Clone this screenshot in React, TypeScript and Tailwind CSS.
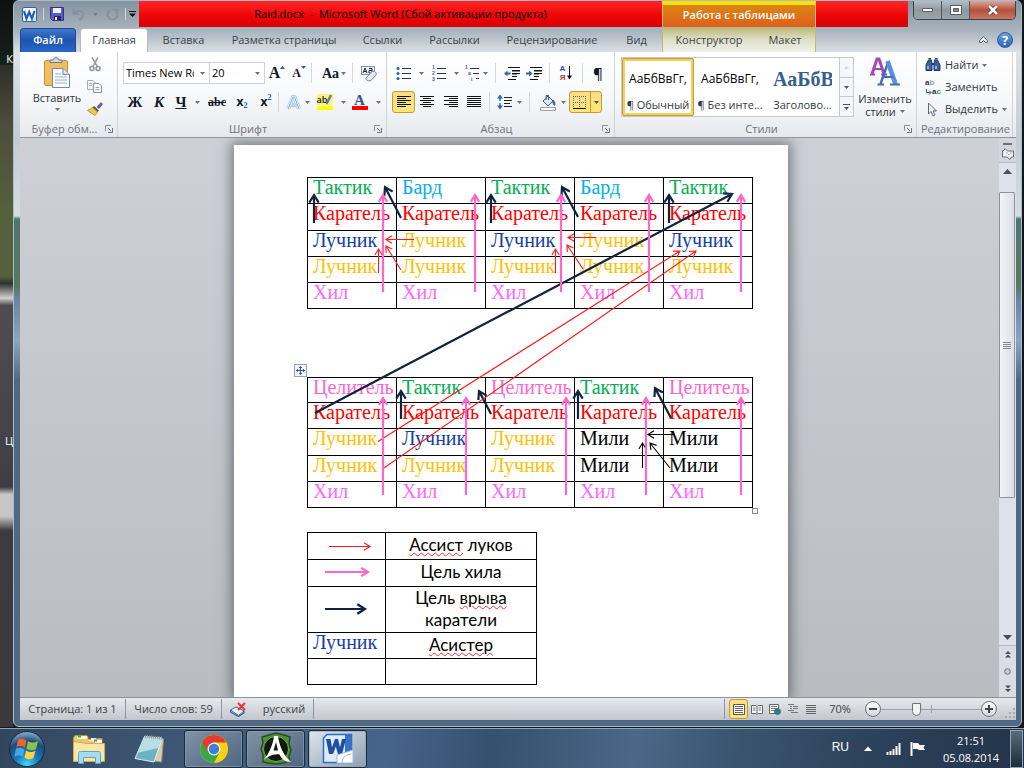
import type { ReactNode } from 'react';
import { clsx } from 'clsx';

const GREEN = 'text-[#00b050]';
const SKY = 'text-[#00b0f0]';
const RED = 'text-[#ff0000]';
const BLUE = 'text-[#1240ab]';
const GOLD = 'text-[#ffc000]';
const VIOLET = 'text-[#ff66ff]';
const PINK = 'text-[#ff66cc]';
const BLACK = 'text-black';

type Cell = [string, string];

const CUSTODIAN: Cell = ['Каратель', RED];
const HEAL: Cell = ['Хил', VIOLET];
const ARCHER: Cell = ['Лучник', GOLD];
const ASSIST: Cell = ['Лучник', BLUE];
const TACTIC: Cell = ['Тактик', GREEN];
const BARD: Cell = ['Бард', SKY];
const HEALER: Cell = ['Целитель', PINK];
const MELEE: Cell = ['Мили', BLACK];

const FIRST_RAID = [
  { height: 'h-[26px]', cells: [TACTIC, BARD, TACTIC, BARD, TACTIC] },
  { height: 'h-[27px]', cells: [CUSTODIAN, CUSTODIAN, CUSTODIAN, CUSTODIAN, CUSTODIAN] },
  { height: 'h-[26px]', cells: [ASSIST, ARCHER, ASSIST, ARCHER, ASSIST] },
  { height: 'h-[26px]', cells: [ARCHER, ARCHER, ARCHER, ARCHER, ARCHER] },
  { height: 'h-[26px]', cells: [HEAL, HEAL, HEAL, HEAL, HEAL] },
];

const SECOND_RAID = [
  { height: 'h-[25px]', cells: [HEALER, TACTIC, HEALER, TACTIC, HEALER] },
  { height: 'h-[26px]', cells: [CUSTODIAN, CUSTODIAN, CUSTODIAN, CUSTODIAN, CUSTODIAN] },
  { height: 'h-[27px]', cells: [ARCHER, ASSIST, ARCHER, MELEE, MELEE] },
  { height: 'h-[26px]', cells: [ARCHER, ARCHER, ARCHER, MELEE, MELEE] },
  { height: 'h-[26px]', cells: [HEAL, HEAL, HEAL, HEAL, HEAL] },
];

const ARROW_STYLES = {
  navy: { color: '#10243f', width: 2.2, head: 9 },
  pink: { color: '#ff66cc', width: 2.2, head: 8 },
  red: { color: '#ff1a1a', width: 1.1, head: 7 },
  black: { color: '#000000', width: 1.1, head: 7 },
};

type ArrowKind = keyof typeof ARROW_STYLES;

// kind, start x/y, end x/y
const ARROWS: [ArrowKind, number, number, number, number][] = [
  ['navy', 314, 223, 314, 195],
  ['navy', 401, 218, 385, 187],
  ['navy', 491, 223, 491, 195],
  ['navy', 578, 217, 562, 187],
  ['navy', 669, 223, 669, 195],
  ['navy', 315, 413, 732, 194],
  ['navy', 401, 419, 401, 391],
  ['navy', 491, 414, 479, 391],
  ['navy', 578, 419, 578, 391],
  ['navy', 671, 418, 655, 388],
  ['red', 414, 239.5, 386, 239.5],
  ['red', 378.5, 273, 378.5, 249],
  ['red', 401, 270, 386, 246],
  ['red', 596, 237.5, 568, 237.5],
  ['red', 555.5, 273, 555.5, 249],
  ['red', 583, 269, 567, 245],
  ['red', 378, 441.5, 680, 251],
  ['red', 384, 468, 696, 251],
  ['black', 673, 434.5, 648, 434.5],
  ['black', 642.5, 468, 642.5, 443],
  ['black', 670, 468, 650, 443],
  ['pink', 383, 292, 383, 195],
  ['pink', 475, 292, 475, 195],
  ['pink', 561, 292, 561, 195],
  ['pink', 649, 292, 649, 195],
  ['pink', 741, 292, 741, 195],
  ['pink', 383, 495, 383, 398],
  ['pink', 466, 495, 466, 398],
  ['pink', 566, 495, 566, 398],
  ['pink', 646, 495, 646, 398],
  ['pink', 741, 495, 741, 398],
  ['red', 329, 546.5, 370, 546.5],
  ['pink', 325, 572, 368, 572],
  ['navy', 325, 609, 365, 609],
];

function arrowPath(x1: number, y1: number, x2: number, y2: number, head: number) {
  const angle = Math.atan2(y2 - y1, x2 - x1);
  const arm = (delta: number) =>
    `${x2 - head * Math.cos(angle + delta)} ${y2 - head * Math.sin(angle + delta)}`;
  return `M${x1} ${y1}L${x2} ${y2}M${arm(0.55)}L${x2} ${y2}L${arm(-0.55)}`;
}

function Svg({ w, h, children, className }: { w: number; h: number; children: ReactNode; className?: string }) {
  return (
    <svg width={w} height={h} viewBox={`0 0 ${w} ${h}`} fill="none" aria-hidden="true" className={clsx('shrink-0', className)}>
      {children}
    </svg>
  );
}

function Caret({ up, className }: { up?: boolean; className?: string }) {
  return (
    <Svg w={5} h={3} className={className}>
      <path d={up ? 'M0 3L2.5 0L5 3Z' : 'M0 0H5L2.5 3Z'} fill="currentColor" />
    </Svg>
  );
}

interface ToolProps {
  label: string;
  className: string;
  children: ReactNode;
  menu?: boolean;
  active?: boolean;
}

function Tool({ label, className, children, menu, active }: ToolProps) {
  return (
    <button
      type="button"
      aria-label={label}
      aria-pressed={active}
      className={clsx(
        'flex h-[22px] shrink-0 items-center justify-center gap-1 rounded-[3px] border text-gray-900',
        active ? 'border-[#c29a3c] bg-gradient-to-b from-[#fbdc85] to-[#ffe672]' : 'border-transparent',
        className,
      )}
    >
      {children}
      {menu && <Caret className="text-gray-500" />}
    </button>
  );
}

function Divider({ className }: { className?: string }) {
  return <span className={clsx('h-5 w-px shrink-0 bg-[#d3d6da]', className)} />;
}

interface GroupProps {
  title: string;
  className: string;
  launcher?: boolean;
  children: ReactNode;
}

function Group({ title, className, launcher, children }: GroupProps) {
  return (
    <section aria-label={title} className={clsx('flex flex-col border-r border-[#cfd3d8]', className)}>
      <div className="h-[69px]">{children}</div>
      <div className="flex h-4 items-center px-1 text-[#6a737c]">
        <span className="flex-1 text-center whitespace-nowrap">{title}</span>
        {launcher && (
          <button type="button" aria-label={`${title}: параметры`}>
            <Svg w={8} h={8}>
              <path d="M0.5 6V0.5H6" stroke="#8b9198" />
              <path d="M3 3L6 6M7.5 3V7.5H3" stroke="#6d747b" />
            </Svg>
          </button>
        )}
      </div>
    </section>
  );
}

function Lines({ rows }: { rows: [number, number][] }) {
  return (
    <Svg w={14} h={12}>
      {rows.map(([x, width], i) => (
        <path key={i} d={`M${x} ${i * 2 + 0.5}h${width}`} stroke="#111" />
      ))}
    </Svg>
  );
}

function TitleBar() {
  return (
    <div className="flex h-[26px] shrink-0">
      <div className="flex w-[119px] items-center gap-[6px] pl-[2px]">
        <Svg w={15} h={15}>
          <rect x="0.5" y="0.5" width="14" height="14" rx="1.5" fill="#f4f8fd" stroke="#2b62b3" />
          <path d="M10 11l4-1v4H9z" fill="#c9dcf4" />
          <path d="M2 4L4.500 11.500L7.200 5L9.900 11.500L12.500 4" stroke="#1f5cb8" strokeWidth="2.200" />
        </Svg>
        <Divider className="h-3! bg-[#8d98a3]" />
        <button type="button" aria-label="Сохранить">
          <Svg w={14} h={14}>
            <path d="M0.5 0.5H13.5V13.5H2.5L0.5 11.5Z" fill="#5b5bc4" stroke="#30308c" />
            <path d="M3 1H11V6H3Z" fill="#eef2ff" />
            <path d="M4 9H11V13H4Z" fill="#24246c" />
            <path d="M5 10H7V13H5Z" fill="#fff" />
          </Svg>
        </button>
        <button type="button" aria-label="Отменить" className="ml-[2px] flex items-center gap-2 text-[#707c88]">
          <Svg w={13} h={13}>
            <path d="M1.500 1V6H7M2.500 5.500C6 1 11 3 11 6.500C11 9 9.500 10.500 7.500 12" stroke="#87919b" strokeWidth="2.200" />
          </Svg>
          <Caret />
        </button>
        <button type="button" aria-label="Повторить" className="ml-[2px]">
          <Svg w={13} h={13}>
            <path d="M3.500 2.500A5 5 0 1 0 9.500 2.500M6 1.500H11V6" stroke="#87919b" strokeWidth="2.200" />
          </Svg>
        </button>
        <Divider className="h-3! bg-[#5c6771]" />
        <button type="button" aria-label="Настройка панели быстрого доступа" className="-ml-[3px]">
          <Svg w={7} h={6}>
            <path d="M0 0.5H7" stroke="#111" />
            <path d="M0 2.5H7L3.5 6Z" fill="#111" />
          </Svg>
        </button>
      </div>
      <h1 className="w-[523px] bg-gradient-to-b from-[#ff2424] via-[#f00808] to-[#d90000] text-center leading-[26px] text-black">
        Raid.docx&nbsp; -&nbsp; Microsoft Word (Сбой активации продукта)
      </h1>
      <div className="w-[154px] border-x border-t-4 border-x-[#f3c08a] border-t-[#ffe000] bg-gradient-to-b from-[#dd8510] to-[#dc5f1c] text-center leading-[20px] font-semibold text-white">
        Работа с таблицами
      </div>
      <div className="flex-1 bg-gradient-to-b from-[#ff2424] via-[#f00808] to-[#d90000]" />
      <div className="ml-[5px] flex h-[19px] w-[103px] overflow-hidden rounded-b-[5px] border border-t-0 border-[#39434c] text-white">
        <button type="button" aria-label="Свернуть" className="flex w-7 items-center justify-center border-r border-[#4d5861] bg-gradient-to-b from-[#b5bdc4] via-[#8e99a2] to-[#9aa5ae]">
          <Svg w={11} h={5}>
            <path d="M0.5 0.5H10.5V3.5H0.5Z" fill="#fff" stroke="#565f68" />
          </Svg>
        </button>
        <button type="button" aria-label="Свернуть в окно" className="flex w-7 items-center justify-center border-r border-[#4d5861] bg-gradient-to-b from-[#b5bdc4] via-[#8e99a2] to-[#9aa5ae]">
          <Svg w={12} h={10}>
            <path d="M0.5 0.5H11.5V9.5H0.5Z" fill="#fff" stroke="#565f68" />
            <path d="M3.5 3.5H8.5V6.5H3.5Z" fill="#7e8993" stroke="#565f68" />
          </Svg>
        </button>
        <button type="button" aria-label="Закрыть" className="flex flex-1 items-center justify-center bg-gradient-to-b from-[#d9a79d] via-[#b5503c] to-[#c9775f]">
          <Svg w={12} h={10}>
            <path d="M2 1L10 9M10 1L2 9" stroke="#4b2a28" strokeWidth="4" />
            <path d="M2 1L10 9M10 1L2 9" stroke="#fff" strokeWidth="2.6" />
          </Svg>
        </button>
      </div>
    </div>
  );
}

const TABS = [
  { label: 'Вставка', width: 'w-[71px]' },
  { label: 'Разметка страницы', width: 'w-[130px]' },
  { label: 'Ссылки', width: 'w-[67px]' },
  { label: 'Рассылки', width: 'w-[77px]' },
  { label: 'Рецензирование', width: 'w-[118px]' },
  { label: 'Вид', width: 'w-[51px]' },
];

function TabRow() {
  return (
    <nav aria-label="Вкладки ленты" className="flex h-[25px] shrink-0 items-stretch text-[#3b4248]">
      <button type="button" className="mt-px w-14 rounded-t-[4px] border border-b-0 border-[#1d4698] bg-gradient-to-b from-[#3d78cc] via-[#1f54ae] to-[#2a68c8] font-semibold text-white">
        Файл
      </button>
      <button type="button" aria-current="page" className="mt-px ml-1 w-[68px] rounded-t-[4px] border border-b-0 border-[#b5bbc2] bg-white">
        Главная
      </button>
      {TABS.map(tab => (
        <button key={tab.label} type="button" className={clsx('pt-[2px] whitespace-nowrap', tab.width)}>
          {tab.label}
        </button>
      ))}
      <div className="flex w-[154px] border-x border-[#c2b96a] bg-gradient-to-b from-[#b9b676] via-[#dedfc6] to-[#eef0ec] pt-[2px]">
        <button type="button" className="w-[92px]">Конструктор</button>
        <button type="button" className="flex-1">Макет</button>
      </div>
      <div className="flex flex-1 items-center justify-end gap-[9px] pr-[3px]">
        <button type="button" aria-label="Свернуть ленту">
          <Svg w={9} h={7}>
            <path d="M0.7 4.5L4.5 0.8L8.3 4.5V6.3H6.3L4.5 4.5L2.7 6.3H0.7Z" fill="#fff" stroke="#4a525a" />
          </Svg>
        </button>
        <button type="button" aria-label="Справка" className="h-4 w-4 rounded-full border border-[#2a5ca8] bg-gradient-to-b from-[#6f9fe0] to-[#2d63b8] text-[13px] leading-[14px] font-bold text-white">
          ?
        </button>
      </div>
    </nav>
  );
}

function ClipboardGroup() {
  return (
    <Group title="Буфер обм..." className="w-[98px]" launcher>
      <div className="flex pt-[5px]">
        <button type="button" className="ml-[11px] flex w-[52px] flex-col items-center">
          <Svg w={30} h={32}>
            <rect x="2.5" y="3.5" width="23" height="25" rx="1.5" fill="#efbe63" stroke="#c9923a" />
            <path d="M8 5.5V3H11C11 0 17 0 17 3H20V5.5Z" fill="#d5d9de" stroke="#6f7780" />
            <path d="M10.5 11.5H21L27.5 17.5V30.5H10.5Z" fill="#fbfdff" stroke="#7388a8" />
            <path d="M21 11.5V17.5H27.5" fill="#dbe5f2" stroke="#7388a8" />
            <path d="M13 17h6M13 20h12M13 23h12M13 26h12" stroke="#9db0cb" />
          </Svg>
          <span className="pt-px text-[#30363c]">Вставить</span>
          <Caret className="mt-px text-gray-500" />
        </button>
        <div className="ml-[2px] flex w-5 flex-col items-center gap-[8px]">
          <button type="button" aria-label="Вырезать">
            <Svg w={12} h={15}>
              <path d="M3 0.5L8 9M9 0.5L4 9" stroke="#9a9fa5" strokeWidth="1.6" />
              <circle cx="3" cy="11.5" r="2" stroke="#8d9399" strokeWidth="1.5" />
              <circle cx="9" cy="11.5" r="2" stroke="#8d9399" strokeWidth="1.5" />
            </Svg>
          </button>
          <button type="button" aria-label="Копировать">
            <Svg w={16} h={14}>
              <path d="M0.5 0.5H6L8.5 3V9.5H0.5Z" fill="#f3f3f3" stroke="#a5a9ad" />
              <path d="M6.5 3.5H12L14.5 6V12.5H6.5Z" fill="#f8f8f8" stroke="#8f9498" />
              <path d="M2 3.5h3M2 5.5h3M8.500 7.500h4M8.500 9.500h4" stroke="#a5a9ad" />
            </Svg>
          </button>
          <button type="button" aria-label="Формат по образцу">
            <Svg w={16} h={14}>
              <path d="M10 5L14 0.500L15.500 2L12 6.500Z" fill="#7b5aa8" stroke="#4c3b78" strokeWidth="0.6" />
              <path d="M7 4L12 8.500L10.500 10L5.500 5.500Z" fill="#4f5a66" />
              <path d="M5.500 5.500L10.500 10L8 13.500L0.500 8.500Z" fill="#f2c74e" stroke="#a67c1c" strokeWidth="0.700" />
            </Svg>
          </button>
        </div>
      </div>
    </Group>
  );
}

function FontGroup() {
  return (
    <Group title="Шрифт" className="w-[269px]" launcher>
      <div className="flex items-center pt-[10px] pl-[5px]">
        <div className="flex h-[22px] w-[87px] items-center border border-[#d0d4d9] bg-white pr-1">
          <input aria-label="Шрифт" defaultValue="Times New Roman" className="w-[70px] pl-[2px] text-black outline-none" />
          <Caret className="ml-auto text-gray-500" />
        </div>
        <div className="-ml-px flex h-[22px] w-[56px] items-center border border-[#d0d4d9] bg-white pr-1">
          <input aria-label="Размер шрифта" defaultValue="20" className="w-9 pl-[2px] text-black outline-none" />
          <Caret className="ml-auto text-gray-500" />
        </div>
        <Tool label="Увеличить размер" className="w-6">
          <span className="-mr-1 font-['Liberation_Serif',serif] text-[16px] font-bold">A</span>
          <Caret up className="mb-3 text-[#2c5aa8]" />
        </Tool>
        <Tool label="Уменьшить размер" className="w-5">
          <span className="-mr-1 font-['Liberation_Serif',serif] text-[12px] font-bold">A</span>
          <Caret className="mb-3 text-[#2c5aa8]" />
        </Tool>
        <Divider className="ml-[2px]" />
        <Tool label="Регистр" className="ml-1 w-9" menu>
          <span className="-mr-[2px] font-['Liberation_Serif',serif] text-[14px] font-bold">Aa</span>
        </Tool>
        <Divider />
        <Tool label="Очистить формат" className="ml-1 w-6">
          <Svg w={18} h={17}>
            <rect x="1.500" y="1.500" width="13" height="8" fill="#eef4fc" stroke="#7d93b5" />
            <path d="M3 8L5 3L7 8M4 6.500h2" stroke="#222" />
            <path d="M9 3.500h3V8H9V5.500h3" stroke="#222" />
            <path d="M6 13L12 6.500C15 5.500 17 8 16 10L11 15.500C8 16.500 5.500 15 6 13Z" fill="#e3e9f2" stroke="#7386a3" />
          </Svg>
        </Tool>
      </div>
      <div className="flex items-center pt-[7px] pl-[5px] font-['Liberation_Serif',serif]">
        <Tool label="Полужирный" className="w-6">
          <b className="text-[15px]">Ж</b>
        </Tool>
        <Tool label="Курсив" className="w-6">
          <b className="text-[15px] italic">К</b>
        </Tool>
        <Tool label="Подчеркнутый" className="w-[33px]" menu>
          <b className="mr-1 text-[15px] underline">Ч</b>
        </Tool>
        <Tool label="Зачеркнутый" className="w-[26px]">
          <b className="text-[12px] line-through">abc</b>
        </Tool>
        <Tool label="Подстрочный знак" className="w-6">
          <b className="font-['Open_Sans',sans-serif] text-[12px]">x</b>
          <b className="-ml-1 mt-2 text-[8px] text-[#2c5aa8]">2</b>
        </Tool>
        <Tool label="Надстрочный знак" className="w-6">
          <b className="font-['Open_Sans',sans-serif] text-[12px]">x</b>
          <b className="-ml-1 mb-2 text-[8px] text-[#2c5aa8]">2</b>
        </Tool>
        <Divider className="mr-1" />
        <Tool label="Текстовые эффекты" className="w-[30px]" menu>
          <Svg w={15} h={15}>
            <path d="M2 14L7 2H8.500L13 14M4.500 10H11" stroke="#a9d3f3" strokeWidth="4" />
            <path d="M2 14L7 2H8.500L13 14M4.500 10H11" stroke="#fff" strokeWidth="2.200" />
            <path d="M2 14L7 2H8.500L13 14M4.500 10H11" stroke="#4f94d0" strokeWidth="0.800" />
          </Svg>
        </Tool>
        <Tool label="Цвет выделения текста" className="w-9" menu>
          <span className="mr-1 flex flex-col">
            <span className="flex h-[11px] w-4 items-center bg-[#fff27a] font-['Open_Sans',sans-serif] text-[9px] font-semibold">
              ab
              <Svg w={6} h={11} className="-ml-px">
                <path d="M0.500 10L5 1" stroke="#5d7fae" strokeWidth="2.400" />
              </Svg>
            </span>
            <span className="mt-px h-1 w-4 bg-[#ffff00]" />
          </span>
        </Tool>
        <Tool label="Цвет текста" className="w-[34px]" menu>
          <span className="mr-1 flex flex-col items-center">
            <b className="text-[15px] leading-[12px] text-[#2e5592]">A</b>
            <span className="h-1 w-4 bg-[#ff0000]" />
          </span>
        </Tool>
      </div>
    </Group>
  );
}

function ListIcon({ marks, indents = [0, 0, 0] }: { marks: string[]; indents?: number[] }) {
  return (
    <Svg w={15} h={17}>
      {marks.map((mark, i) => (
        <g key={i}>
          <path d={`M${6 + indents[i]} ${i * 5 + 3.5}H15`} stroke="#333" />
          {mark === '•' ? (
            <circle cx="2" cy={i * 5 + 3.5} r="1.600" fill="#2f62b5" />
          ) : (
            <text x={indents[i] + 1} y={i * 6 + 4} fill="#2f62b5" fontSize="5" fontWeight="bold" fontFamily="Liberation Sans">{mark}</text>
          )}
        </g>
      ))}
    </Svg>
  );
}

function IndentIcon({ increase }: { increase?: boolean }) {
  return (
    <Svg w={16} h={13}>
      <path d="M4 0.500h12M8 3.500h8M8 6.500h8M8 9.500h5M4 12.500h8" stroke="#111" />
      <path d="M8 4h8M8 7h5" stroke="#111" />
      <path d={increase ? 'M6.500 6.500L3 3.500V5.500H0V7.500H3V9.500Z' : 'M0 6.500L3.500 3.500V5.500H6.500V7.500H3.500V9.500Z'} fill="#2f62b5" />
    </Svg>
  );
}

function ParagraphGroup() {
  return (
    <Group title="Абзац" className="w-[228px]" launcher>
      <div className="flex items-center pt-[10px] pl-[5px]">
        <Tool label="Маркеры" className="w-[35px]" menu>
          <span className="mr-1"><ListIcon marks={['•', '•', '•']} /></span>
        </Tool>
        <Tool label="Нумерация" className="w-[35px]" menu>
          <span className="mr-1"><ListIcon marks={['1', '2', '3']} /></span>
        </Tool>
        <Tool label="Многоуровневый список" className="w-7" menu>
          <ListIcon marks={['1', 'a', 'i']} indents={[0, 3, 6]} />
        </Tool>
        <Divider className="mx-[5px]" />
        <Tool label="Уменьшить отступ" className="w-[22px]"><IndentIcon /></Tool>
        <Tool label="Увеличить отступ" className="w-[22px]"><IndentIcon increase /></Tool>
        <Divider className="mx-1" />
        <Tool label="Сортировка" className="w-6">
          <span className="-mr-[2px] flex flex-col font-['Liberation_Sans',sans-serif] text-[8px] leading-[9px] font-bold">
            <span className="text-[#2c4f94]">А</span>
            <span className="text-[#a33a3a]">Я</span>
          </span>
          <Svg w={5} h={14}>
            <path d="M2.500 0V11" stroke="#111" />
            <path d="M0 9.500H5L2.500 13.500Z" fill="#111" />
          </Svg>
        </Tool>
        <Divider className="mx-1" />
        <Tool label="Отобразить все знаки" className="w-[22px]">
          <span className="text-[15px] font-semibold">¶</span>
        </Tool>
      </div>
      <div className="flex items-center pt-[7px] pl-[5px]">
        <Tool label="По левому краю" className="w-[23px]" active>
          <Lines rows={[[0, 14], [0, 9], [0, 14], [0, 9], [0, 14], [0, 9]]} />
        </Tool>
        <Tool label="По центру" className="w-6">
          <Lines rows={[[0, 14], [3, 8], [0, 14], [3, 8], [0, 14], [3, 8]]} />
        </Tool>
        <Tool label="По правому краю" className="w-[23px]">
          <Lines rows={[[0, 14], [5, 9], [0, 14], [5, 9], [0, 14], [5, 9]]} />
        </Tool>
        <Tool label="По ширине" className="w-[23px]">
          <Lines rows={[[0, 14], [0, 14], [0, 14], [0, 14], [0, 14], [0, 14]]} />
        </Tool>
        <Divider className="mx-1" />
        <Tool label="Интервал" className="w-[30px]" menu>
          <Svg w={16} h={16}>
            <path d="M3 2V14" stroke="#2f62b5" strokeWidth="1.400" strokeDasharray="5 2" />
            <path d="M0 4.500L3 0.500L6 4.500ZM0 11.500L3 15.500L6 11.500Z" fill="#2f62b5" />
            <path d="M7 3.500h8M7 6.500h8M7 9.500h6M7 12.500h8" stroke="#222" />
          </Svg>
        </Tool>
        <Divider className="mx-[5px]" />
        <Tool label="Заливка" className="w-[34px]" menu>
          <Svg w={18} h={17}>
            <path d="M4 7L9 2L14 7L9 12Z" fill="#dce8f7" stroke="#35557f" />
            <path d="M7 6V1.500h2.500V6" stroke="#35557f" />
            <path d="M14 6C16 8 16.500 10 15.500 11.500C14 10 13.500 8 14 6Z" fill="#2f62b5" stroke="#2f62b5" />
            <path d="M1.500 13.500H16.500V16.500H1.500Z" fill="#fff" stroke="#9a9fa5" />
          </Svg>
        </Tool>
        <Tool label="Границы" className="w-[33px]" active>
          <Svg w={13} h={13}>
            <path d="M0.500 0V12M6.500 0V12M12.500 0V12M0 0.500H13M0 6.500H13" stroke="#4a64a0" strokeDasharray="1 1" />
            <path d="M0 12.500H13" stroke="#111" />
          </Svg>
          <span className="h-5 w-px bg-[#c29a3c]" />
          <Caret className="-ml-px text-gray-600" />
        </Tool>
      </div>
    </Group>
  );
}

function StylesGroup() {
  return (
    <Group title="Стили" className="flex-1" launcher>
      <div className="flex pt-[5px] pl-[6px]">
        <div className="flex h-[60px] w-[233px] border border-[#c5cad0] bg-white text-center text-[#333a40]">
          <button type="button" aria-pressed="true" className="flex w-[72px] flex-col items-center justify-between overflow-hidden rounded-[2px] border-[3px] border-[#f3cf5e] pt-[10px] whitespace-nowrap outline outline-1 -outline-offset-1 outline-[#c99d33]">
            <span className="text-[12px] leading-[16px] text-black">АаБбВвГг,</span>
            <span>¶ Обычный</span>
          </button>
          <button type="button" className="flex w-[72px] flex-col items-center justify-between pt-[13px] pb-[3px] whitespace-nowrap">
            <span className="text-[12px] leading-[16px] text-black">АаБбВвГг,</span>
            <span>¶ Без инте...</span>
          </button>
          <button type="button" className="flex w-[73px] flex-col items-center justify-between pt-[9px] pb-[3px] whitespace-nowrap">
            <span className="w-[59px] overflow-hidden text-left font-['Liberation_Serif',serif] text-[20px] leading-[24px] font-bold text-[#365f91]">АаБбВвГг</span>
            <span>Заголово...</span>
          </button>
          <div className="flex flex-1 flex-col divide-y divide-[#c5cad0] border-l border-[#c5cad0] bg-[#f6f7f9] text-gray-600">
            <button type="button" aria-label="Вверх" className="flex flex-1 items-center justify-center text-gray-300"><Caret up /></button>
            <button type="button" aria-label="Вниз" className="flex flex-1 items-center justify-center"><Caret /></button>
            <button type="button" aria-label="Дополнительные параметры" className="flex flex-1 items-center justify-center">
              <Svg w={7} h={6}>
                <path d="M0 0.500H7" stroke="#4b5563" />
                <path d="M1 3H6L3.500 6Z" fill="#4b5563" />
              </Svg>
            </button>
          </div>
        </div>
        <button type="button" className="flex flex-1 flex-col items-center leading-[13px] text-[#30363c]">
          <Svg w={30} h={30}>
            <path d="M2 17L7 2H9L14 17" stroke="#a548b5" strokeWidth="3" />
            <path d="M4 12H12M0 17.500H5M11 17.500H17" stroke="#a548b5" strokeWidth="2" />
            <path d="M10.500 27L17.500 7" stroke="#3c6cba" strokeWidth="2.400" />
            <path d="M17.500 4L25.500 27" stroke="#5b8fdd" strokeWidth="4.600" />
            <path d="M12.500 20H23M7.500 27.500H14M20 27.500H30" stroke="#3c6cba" strokeWidth="2" />
          </Svg>
          <span className="pt-[5px]">Изменить</span>
          <span className="flex items-center gap-1">стили <Caret className="text-gray-500" /></span>
        </button>
      </div>
    </Group>
  );
}

function EditingGroup() {
  return (
    <Group title="Редактирование" className="w-[96px]">
      <div className="flex flex-col gap-[2px] pt-[3px] pl-2 text-[#30363c]">
        <button type="button" className="flex h-5 items-center gap-1">
          <Svg w={16} h={14}>
            <path d="M1 7L3.500 2H6.500L7 7V12.500H1ZM15 7L12.500 2H9.500L9 7V12.500H15Z" fill="#3d5f9a" stroke="#20396a" />
            <path d="M3.500 0.500h2.500M10 0.500h2.500M7 6h2" stroke="#20396a" strokeWidth="2" />
            <path d="M3 8v3M11 8v3" stroke="#b7cdf0" strokeWidth="1.500" />
          </Svg>
          Найти
          <Caret className="text-gray-500" />
        </button>
        <button type="button" className="flex h-5 items-center gap-1">
          <span className="flex w-4 flex-col font-['Liberation_Sans',sans-serif] text-[8px] leading-[9px] font-bold" aria-hidden="true">
            <span className="text-left">a<span className="text-gray-400">b</span></span>
            <span className="flex items-center justify-end">
              <Svg w={6} h={6}>
                <path d="M0.500 0V3.500H5M3 1.500L5 3.500L3 5.500" stroke="#2c5aa8" />
              </Svg>
              a<span className="text-[#1f9a3a]">c</span>
            </span>
          </span>
          Заменить
        </button>
        <button type="button" className="flex h-5 items-center gap-1">
          <Svg w={16} h={15}>
            <path d="M3.500 1V12L6 9.500L8 14L10 13L8 9H11.500Z" fill="#f7faff" stroke="#53698f" />
          </Svg>
          Выделить
          <Caret className="text-gray-500" />
        </button>
      </div>
    </Group>
  );
}

function RaidTable({ rows, label }: { rows: typeof FIRST_RAID; label: string }) {
  return (
    <table aria-label={label} className="w-[446px] table-fixed border-collapse font-['Liberation_Serif',serif] text-[20px] leading-[19px]">
      <tbody>
        {rows.map((row, i) => (
          <tr key={i} className={row.height}>
            {row.cells.map(([text, color], j) => (
              <td key={j} className={clsx('border border-black p-0 pl-[5px] align-top', color)}>
                {text}
              </td>
            ))}
          </tr>
        ))}
      </tbody>
    </table>
  );
}

function Misspelled({ children }: { children: string }) {
  return <span className="underline decoration-red-500 decoration-wavy decoration-1 underline-offset-1">{children}</span>;
}

function LegendTable() {
  const keyCell = 'border border-black p-0 pl-[5px] align-top text-[20px] leading-[19px]';
  const textCell = "border border-black p-0 text-center align-top font-['Lato','Open_Sans',sans-serif] text-[17px] leading-[23px] text-black";
  return (
    <table aria-label="Обозначения" className="w-[230px] table-fixed border-collapse font-['Liberation_Serif',serif]">
      <colgroup>
        <col className="w-[78px]" />
        <col />
      </colgroup>
      <tbody>
        <tr className="h-[27px]">
          <td className={keyCell} />
          <td className={textCell}><Misspelled>Ассист</Misspelled> луков</td>
        </tr>
        <tr className="h-[27px]">
          <td className={keyCell} />
          <td className={textCell}>Цель хила</td>
        </tr>
        <tr className="h-[46px]">
          <td className={keyCell} />
          <td className={clsx(textCell, 'px-6 leading-[22px]!')}>Цель <Misspelled>врыва</Misspelled><br />каратели</td>
        </tr>
        <tr className="h-[26px]">
          <td className={clsx(keyCell, BLUE)}>Лучник</td>
          <td className={textCell}><Misspelled>Асистер</Misspelled></td>
        </tr>
        <tr className="h-[26px]">
          <td className={keyCell} />
          <td className={textCell} />
        </tr>
      </tbody>
    </table>
  );
}

function Page() {
  return (
    <article className="relative h-[553px] w-[554px] shrink-0 bg-white pt-8 pl-[73px] shadow-[0_0_12px_3px_rgba(60,66,74,0.6)]">
      <RaidTable rows={FIRST_RAID} label="Первый рейд" />
      <div className="h-[68px]" />
      <RaidTable rows={SECOND_RAID} label="Второй рейд" />
      <div className="h-6" />
      <LegendTable />
      <svg viewBox="234 145 554 553" fill="none" aria-hidden="true" className="pointer-events-none absolute inset-0 h-full w-full">
        {ARROWS.map(([kind, x1, y1, x2, y2], i) => {
          const style = ARROW_STYLES[kind];
          return <path key={i} d={arrowPath(x1, y1, x2, y2, style.head)} stroke={style.color} strokeWidth={style.width} />;
        })}
        <rect x="294.500" y="364.500" width="12" height="12" fill="#f3f5f8" stroke="#9aa1a9" />
        <path d="M300.500 366.500V374.500M296.500 370.500H304.500M299 368L300.500 366.500L302 368M299 373L300.500 374.500L302 373M298 369L296.500 370.500L298 372M303 369L304.500 370.500L303 372" stroke="#2f5fc0" />
        <rect x="752.500" y="508.500" width="5" height="5" fill="#fff" stroke="#8a8a8a" />
      </svg>
    </article>
  );
}

function ScrollBar() {
  return (
    <div className="flex w-[17px] shrink-0 flex-col items-center bg-[#dde1e9] text-[#4a4f55]">
      <div className="flex w-full flex-col items-center bg-[#d3d7dd]">
        <span className="mt-[5px] h-[2px] w-[9px] bg-[#6b7077]" />
        <button type="button" aria-label="Линейка" className="flex h-[18px] w-full items-center justify-center border-b border-[#b3b9c1]">
          <Svg w={12} h={12}>
            <path d="M0.500 2.500H2L3 0.500L5.500 3H11.500V9H9.500L8 11.500L5 9H0.500Z" fill="#eef0f3" stroke="#6b7077" />
            <path d="M5 4.500v1M7 6v1M9 4.500v1" stroke="#6b7077" />
          </Svg>
        </button>
      </div>
      <button type="button" aria-label="Прокрутить вверх" className="flex h-[17px] items-center">
        <Svg w={9} h={5}><path d="M0 5L4.500 0L9 5Z" fill="currentColor" /></Svg>
      </button>
      <div className="flex w-full flex-1 flex-col items-start">
        <div className="mt-3 flex h-[68%] w-4 flex-col items-center justify-center gap-px rounded-[1px] border border-[#8c929b] bg-gradient-to-r from-[#f3f5f8] to-[#dcdfe5]">
          <span className="h-px w-2 bg-[#848b94]" />
          <span className="h-px w-2 bg-[#848b94]" />
          <span className="h-px w-2 bg-[#848b94]" />
          <span className="h-px w-2 bg-[#848b94]" />
        </div>
      </div>
      <button type="button" aria-label="Прокрутить вниз" className="flex h-4 w-full items-center justify-center border-b border-[#b3b9c1]">
        <Svg w={9} h={5}><path d="M0 0H9L4.500 5Z" fill="currentColor" /></Svg>
      </button>
      <div className="flex w-full flex-col items-center bg-[#d9dce2]">
        <button type="button" aria-label="Предыдущая страница" className="flex h-[17px] items-center">
          <Svg w={6} h={7}><path d="M0 3L3 0L6 3ZM0 6.500L3 3.500L6 6.500Z" fill="currentColor" /></Svg>
        </button>
        <button type="button" aria-label="Выбор объекта перехода" className="flex h-[17px] items-center">
          <Svg w={7} h={7}><circle cx="3.500" cy="3.500" r="2.800" fill="#c9cdd3" stroke="#6b7077" /></Svg>
        </button>
        <button type="button" aria-label="Следующая страница" className="flex h-[17px] items-center">
          <Svg w={6} h={7}><path d="M0 0.500H6L3 3.500ZM0 4H6L3 7Z" fill="currentColor" /></Svg>
        </button>
      </div>
    </div>
  );
}

function StatusBar() {
  return (
    <footer className="flex h-[23px] shrink-0 items-center border-t border-[#8a919a] bg-gradient-to-b from-[#e6e8ec] to-[#c3c7cd] text-[#3b4248]">
      <span className="w-[105px] text-center">Страница: 1 из 1</span>
      <Divider className="bg-[#8f969e]!" />
      <span className="w-[95px] text-center">Число слов: 59</span>
      <Divider className="bg-[#8f969e]!" />
      <button type="button" aria-label="Проверка правописания" className="ml-2">
        <Svg w={17} h={15}>
          <path d="M0.500 8L6 5L14 9L8.500 13.500Z" fill="#eef3fb" stroke="#3f62a8" />
          <path d="M0.500 8V10L8.500 14.500V13.500M8.500 14.500L14 11V9" stroke="#3f62a8" strokeWidth="1.300" />
          <path d="M8 1L15 8M15 1L8 8" stroke="#ee3a22" strokeWidth="2" />
        </Svg>
      </button>
      <button type="button" className="ml-2 w-[58px] text-center">русский</button>
      <Divider className="bg-[#8f969e]!" />
      <div className="flex flex-1 items-center justify-end">
        <Divider className="mr-1 bg-[#8f969e]!" />
        <Tool label="Разметка страницы" className="h-5! w-[19px]" active>
          <Svg w={12} h={11}>
            <path d="M0.500 0.500H11.500V10.500H0.500Z" fill="#fff" stroke="#555" />
            <path d="M2 2.500h8M2 4.500h8M2 6.500h8M2 8.500h8" stroke="#666" />
          </Svg>
        </Tool>
        <Tool label="Режим чтения" className="w-[18px]">
          <Svg w={12} h={11}>
            <path d="M0.500 1.500H5L6 2.500L7 1.500H11.500V9.500H7L6 10.500L5 9.500H0.500ZM6 2.500V10" fill="#f7f7f7" stroke="#666" />
            <path d="M2 4h2.500M2 6h2.500M7.500 4H10M7.500 6H10" stroke="#777" />
          </Svg>
        </Tool>
        <Tool label="Веб-документ" className="w-[18px]">
          <Svg w={12} h={11}>
            <path d="M0.500 0.500H9.500V9.500H0.500Z" fill="#fff" stroke="#666" />
            <path d="M2 2.500h6M2 4.500h6M2 6.500h4" stroke="#777" />
            <circle cx="8.500" cy="7.500" r="3" fill="#2b78a8" stroke="#2a8a4a" />
          </Svg>
        </Tool>
        <Tool label="Структура" className="w-[18px]">
          <Svg w={10} h={10}>
            <path d="M0 0.500h6M2 2.500h2M5 2.500h5M2 4.500h2M5 4.500h5M0 6.500h6M3 8.500h7" stroke="#777" />
          </Svg>
        </Tool>
        <Tool label="Черновик" className="w-[18px]">
          <Svg w={10} h={9}>
            <path d="M0 0.500h10M0 2.500h10M0 4.500h10M0 6.500h10M0 8.500h10" stroke="#666" />
          </Svg>
        </Tool>
        <span className="w-10 text-center">70%</span>
        <button type="button" aria-label="Уменьшить" className="ml-[5px] flex h-4 w-4 items-center justify-center rounded-full border border-[#6d737a] bg-gradient-to-b from-white to-[#d5d8dd]">
          <Svg w={8} h={2}><path d="M0 1H8" stroke="#444" strokeWidth="2" /></Svg>
        </button>
        <span className="flex h-4 w-[100px] items-center bg-[linear-gradient(#9aa0a8,#9aa0a8),linear-gradient(#9aa0a8,#9aa0a8)] bg-[length:100%_1px,1px_8px] bg-center bg-no-repeat">
          <input
            type="range"
            aria-label="Масштаб"
            min={0}
            max={100}
            defaultValue={34}
            className="h-4 w-full appearance-none bg-transparent [&::-webkit-slider-thumb]:h-[13px] [&::-webkit-slider-thumb]:w-[9px] [&::-webkit-slider-thumb]:appearance-none [&::-webkit-slider-thumb]:rounded-b-[5px] [&::-webkit-slider-thumb]:border [&::-webkit-slider-thumb]:border-[#6d737a] [&::-webkit-slider-thumb]:bg-[#f2f3f5]"
          />
        </span>
        <button type="button" aria-label="Увеличить" className="flex h-4 w-4 items-center justify-center rounded-full border border-[#6d737a] bg-gradient-to-b from-white to-[#d5d8dd]">
          <Svg w={8} h={8}><path d="M0 4H8M4 0V8" stroke="#444" strokeWidth="2" /></Svg>
        </button>
        <Svg w={11} h={11} className="mt-2 ml-2">
          <path d="M8 0h2v2h-2zM4 4h2v2h-2zM8 4h2v2h-2zM0 8h2v2h-2zM4 8h2v2h-2zM8 8h2v2h-2z" fill="#a2a8af" />
        </Svg>
      </div>
    </footer>
  );
}

function TaskButton({ label, bright, children }: { label: string; bright?: boolean; children: ReactNode }) {
  return (
    <button
      type="button"
      aria-label={label}
      className={clsx(
        'flex h-[38px] w-[59px] items-center justify-center rounded-[3px] border border-[#1c2a39] ring-1 ring-[#8ea3b8]/60 ring-inset',
        bright ? 'bg-gradient-to-br from-[#dfe6ec] to-[#8c9fb2]' : 'bg-gradient-to-br from-[#8193a6] to-[#4f6680]',
      )}
    >
      {children}
    </button>
  );
}

function TaskBar() {
  return (
    <div className="flex h-10 shrink-0 items-center border-t border-[#8fa5b8] bg-[linear-gradient(100deg,#33475c_0%,#3d5775_18%,#46648a_38%,#36506f_48%,#4a6888_62%,#3a5470_72%,#2d435c_84%,#223449_100%)] text-white">
      <button type="button" aria-label="Пуск" className="ml-2">
        <Svg w={38} h={38}>
          <defs>
            <radialGradient id="orb" cx="0.5" cy="0.95" r="0.9">
              <stop offset="0" stopColor="#3fe0ff" />
              <stop offset="0.35" stopColor="#1a7fc0" />
              <stop offset="0.75" stopColor="#1b4a7c" />
              <stop offset="1" stopColor="#7ba0bf" />
            </radialGradient>
          </defs>
          <circle cx="19" cy="19" r="17.500" fill="url(#orb)" stroke="#122a45" />
          <path d="M10 9.500C13 8 15.500 8.500 18.500 10.500L17 17.500C14.500 15.500 11.500 15.500 8.500 17Z" fill="#f0642c" />
          <path d="M20 11C23 13 26 13 30 11L28 19C24.500 21 21.500 20.500 18.500 18.500Z" fill="#8cc63f" />
          <path d="M8 18.500C11 17 14 17.500 16.500 19.500L15 26.500C12.500 25 9.500 25 6.500 26.500Z" fill="#4aa5e8" />
          <path d="M18 20.500C21 22.500 24 22.500 27.500 20.500L25.500 28C22.500 30 19.500 29.500 16.500 27.500Z" fill="#ffd23f" />
        </Svg>
      </button>
      <button type="button" aria-label="Проводник" className="ml-[26px]">
        <Svg w={34} h={32}>
          <path d="M1.500 28.500V4.500L3 2.500H15L17 5.500H30V28.500Z" fill="#e9c86a" stroke="#b8923c" />
          <path d="M5 4.500H15M16 6.500H24M23 8.500H30" stroke="#fff" strokeWidth="2.500" />
          <path d="M6 3.500h3" stroke="#2faa3c" strokeWidth="2" />
          <path d="M16 5.500h3" stroke="#d43a2a" strokeWidth="2" />
          <path d="M22 7.500h3" stroke="#2d8ad4" strokeWidth="2" />
          <path d="M1.500 8.500L15 10.500H32.500V28.500H1.500Z" fill="#f8e6a2" stroke="#d0ab50" />
          <path d="M6.500 30.500V20.500C6.500 19 7 18.500 8.500 18.500H26.500C28 18.500 28.500 19 28.500 20.500V30.500H23.500V24.500H11.500V30.500Z" fill="#a5dcf2" stroke="#5aa7cc" />
        </Svg>
      </button>
      <button type="button" aria-label="Блокнот" className="ml-[28px]">
        <Svg w={32} h={30}>
          <path d="M11 3L29.500 5L27.500 28L20 27Z" fill="#d9cfae" stroke="#9c9274" />
          <path d="M10.500 2.500L28 4L20 28L1 24.500Z" fill="#6fb0c2" stroke="#dbeff4" />
          <path d="M10.500 2.500L28 4L24 14L3 19Z" fill="#b9dde5" />
          <path d="M11 2.500L28 4" stroke="#8d9499" strokeWidth="3" strokeDasharray="1 1" />
        </Svg>
      </button>
      <div className="ml-[18px] flex gap-[3px]">
        <TaskButton label="Google Chrome">
          <Svg w={28} h={28}>
            <circle cx="14" cy="14" r="14" fill="#fcd20a" />
            <path d="M14 14L1.900 7A14 14 0 0 0 14 28L19.600 17.200Z" fill="#3ba64a" />
            <path d="M1.900 7A14 14 0 0 1 26.300 7.500H14L8.400 17.200Z" fill="#e33b2e" />
            <circle cx="14" cy="14" r="6.500" fill="#f2f2f2" />
            <circle cx="14" cy="14" r="5.200" fill="#3f7fd6" />
          </Svg>
        </TaskButton>
        <TaskButton label="ArcheAge">
          <Svg w={34} h={34}>
            <path d="M3 5L10 3L17 1L25 3L31 5L30 12L32 18L30 24L31 29L24 31L17 32L9 31L4 30L4 23L2 17L4 11Z" fill="#4f8f35" stroke="#274f1b" strokeWidth="1.500" />
            <circle cx="17" cy="17" r="12.500" fill="#0d1a0d" stroke="#6fae4c" />
            <path d="M2 30C9 25 14 13 15 4H19C20.500 14 24 23 32 30C26 30 22.500 27 20.500 22.500C14 21.500 8 25 2 30Z" fill="#fff" />
            <path d="M14.500 18.500L17 10L19 18.500Z" fill="#0d1a0d" />
          </Svg>
        </TaskButton>
        <TaskButton label="Microsoft Word" bright>
          <Svg w={32} h={32}>
            <path d="M5 1.500H29.500V29.500H1.500V5Z" fill="#dfeafa" stroke="#2f6cc0" strokeWidth="1.500" />
            <path d="M23 1.500H29.500V29.500H23Z" fill="#3a74c8" />
            <path d="M4 6H8.500L10 14.500L13 6H16L18 14.500L20 6H24L20 21H16L13.800 13.500L11 21H7Z" fill="#1c4f9f" />
            <path d="M15 22L31 17V30H15Z" fill="#fff" stroke="#9db8dc" />
            <path d="M20 29.500C20 25 23 22 29 21" stroke="#9db8dc" />
          </Svg>
        </TaskButton>
      </div>
      <div className="flex flex-1 items-center justify-end">
        <span className="mr-[15px] mb-1 font-['Liberation_Sans',sans-serif] text-[12px]">RU</span>
        <Svg w={8} h={5} className="mr-[14px]"><path d="M0 5L4 0.500L8 5Z" fill="#fff" /></Svg>
        <Svg w={16} h={13} className="mr-2">
          <path d="M1.500 13V10M4.500 13V9M7.500 13V7M10.500 13V4M13.500 13V1" stroke="#fff" strokeWidth="2" />
        </Svg>
        <Svg w={16} h={15} className="mr-[14px]">
          <path d="M1.500 1V15" stroke="#fff" strokeWidth="2" />
          <path d="M3 2H8L9.500 4H15L13.500 6.500L15 9H9L7.500 8H3Z" fill="#fff" />
        </Svg>
        <time dateTime="2014-08-05T21:51" className="flex w-[62px] flex-col text-center text-[11px] leading-[17px]">
          <span>21:51</span>
          <span>05.08.2014</span>
        </time>
      </div>
      <button type="button" aria-label="Свернуть все окна" className="mr-[1px] ml-2 h-[38px] w-[13px] border border-[#93a5b5] bg-gradient-to-b from-[#5b6b7c] to-[#1d2c3c]" />
    </div>
  );
}

export default function App() {
  return (
    <div className="flex h-screen w-full flex-col overflow-hidden bg-[#11161b] font-['Open_Sans',sans-serif] text-[11px]">
      <div className="flex min-h-0 flex-1 pb-px">
        <div className="flex w-[13px] shrink-0 flex-col items-end overflow-hidden bg-[linear-gradient(#0c1210_0%,#18201a_9%,#2b3028_9%,#4b4e3b_17%,#55613c_30%,#53613c_38%,#2f3330_39%,#d0d0cd_41%,#4d4d53_42%,#47464c_55%,#3f3e44_67%,#c6c6c6_68%,#c6c6c6_71%,#3c3b3f_73%,#3a3a3d_100%)] text-white">
          <span className="mt-[51px]">К</span>
          <span className="mt-[365px]">Ц</span>
        </div>
        <div className="mr-[2px] flex min-w-0 flex-1 flex-col rounded-[6px] border border-[#a9bccb] bg-[linear-gradient(#8593a0_0px,#a9b4be_30px,#dde2e6_52px,#c3ccd2_140px,#d5dde0_215px,#4f7573_218px,#56785f_285px,#6b86a5_300px,#8aa5c0_340px,#4f6985_380px,#4f6985_100%)] pr-[5px] pb-[6px] pl-[6px]">
          <div className="flex min-h-0 flex-1 flex-col">
            <TitleBar />
            <TabRow />
            <div className="flex h-[86px] shrink-0 border-b border-[#8f959c] bg-gradient-to-b from-white via-[#f8f9fb] to-[#e6e9ed]">
              <ClipboardGroup />
              <FontGroup />
              <ParagraphGroup />
              <StylesGroup />
              <EditingGroup />
              <div className="w-[3px]" />
            </div>
            <main className="flex min-h-0 flex-1 bg-gradient-to-b from-[#cdd1d6] to-[#b9bcc0]">
              <div className="flex flex-1 justify-center overflow-hidden pt-[7px] pl-[3px]">
                <Page />
              </div>
              <ScrollBar />
            </main>
            <StatusBar />
          </div>
        </div>
      </div>
      <TaskBar />
    </div>
  );
}
